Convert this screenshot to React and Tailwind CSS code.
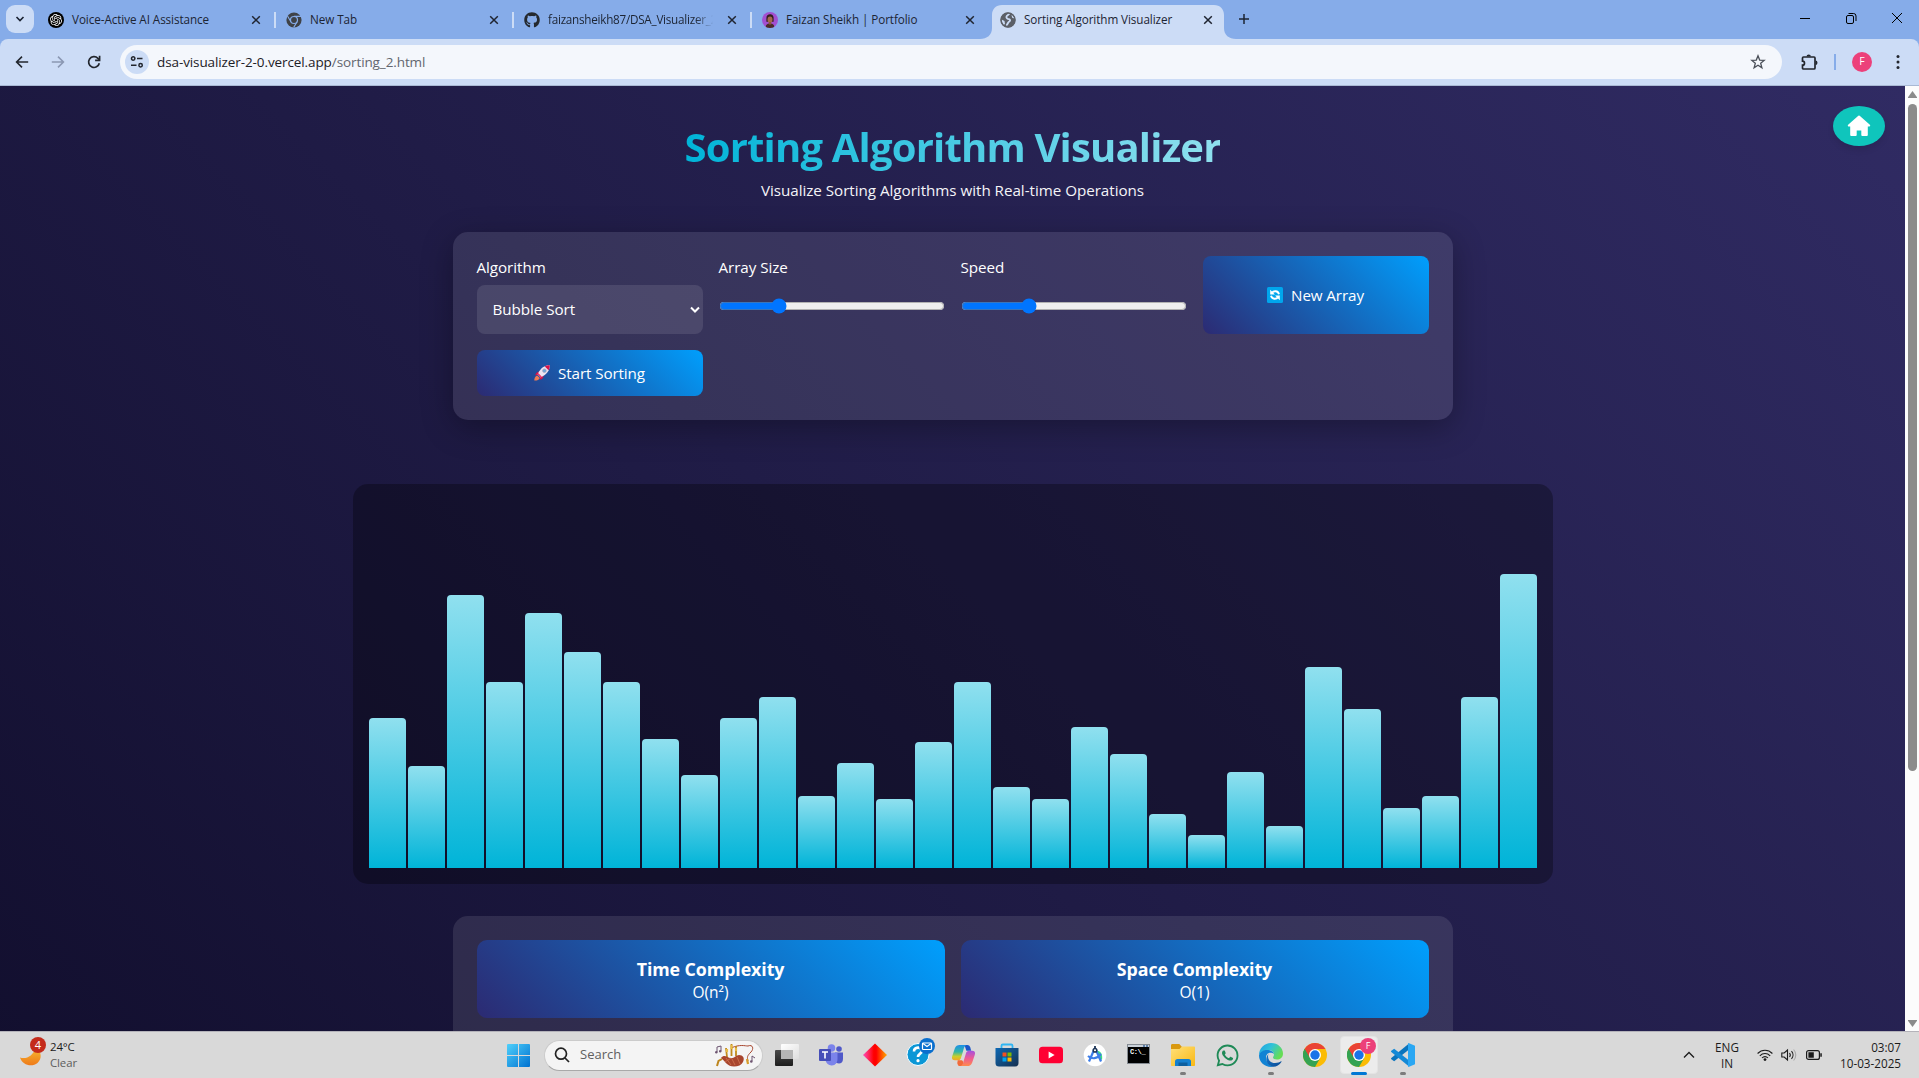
import React from "react";
import { SiOpenai } from "react-icons/si";
import { FaGithub } from "react-icons/fa";
import { IoLogoWhatsapp } from "react-icons/io5";

const BARS = [
  150, 102, 273, 186, 255, 216, 186, 129, 93, 150, 171, 72, 105, 69, 126, 186, 81, 69, 141, 114,
  54, 33, 96, 42, 201, 159, 60, 72, 171, 294,
];

/* ---------- browser chrome icons ---------- */

function CloseIcon() {
  return (
    <svg className="size-[10px] shrink-0" viewBox="0 0 10 10" fill="none" stroke="#1f2430" strokeWidth="1.5">
      <path d="M1.2 1.2l7.6 7.6M8.8 1.2l-7.6 7.6" />
    </svg>
  );
}

function ChromeMono() {
  return (
    <svg className="size-4" viewBox="0 0 16 16">
      <circle cx="8" cy="8" r="7.6" fill="#3f4247" />
      <circle cx="8" cy="8" r="3.5" fill="none" stroke="#86ace9" strokeWidth="1.2" />
      <path d="M8 4.4h7M4.9 9.8L1.5 4M11.1 9.8L7.7 15.4" stroke="#86ace9" strokeWidth="1.1" />
    </svg>
  );
}

function Avatar() {
  return (
    <svg className="size-4" viewBox="0 0 16 16">
      <clipPath id="av"><circle cx="8" cy="8" r="8" /></clipPath>
      <g clipPath="url(#av)">
        <rect width="16" height="16" fill="#a24fd0" />
        <path d="M4.4 6.5C4.200 3.600 6 2.300 8 2.300s3.900 1.300 3.600 4.400v3H4.400z" fill="#33201f" />
        <ellipse cx="8" cy="7.600" rx="2.500" ry="3.200" fill="#a5694d" />
        <path d="M3.500 16c0-3.500 2-4.600 4.500-4.600s4.500 1.100 4.500 4.600z" fill="#4b2c25" />
        <path d="M6.800 10h2.400v2.500H6.800z" fill="#8f5840" />
      </g>
    </svg>
  );
}

function Globe() {
  return (
    <svg className="size-4" viewBox="0 0 16 16">
      <circle cx="8" cy="8" r="7.400" fill="#5c6068" />
      <path d="M9.500 1.500C8.500 3 7 3 6.500 4.500 6 6 7.500 7 9 7.200c1.500.3 1.500 1.800 0 2.600-1.200.7-1 1.800-2.200 3" fill="none" stroke="#ccdcf6" strokeWidth="1.800" strokeLinecap="round" />
      <path d="M1.500 7.500l3 1.500.5 3-1.500 1A7 7 0 011.500 7.500zM11.500 3l2 .5 1 3-2.300-.8z" fill="#ccdcf6" />
      <circle cx="8" cy="8" r="7" fill="none" stroke="#5c6068" strokeWidth="1.500" />
    </svg>
  );
}

function Tab({ icon, title, faded, divider }) {
  return (
    <div className="relative flex h-[29px] w-[238px] shrink-0 items-center">
      <span className="ml-[14px] flex size-4 shrink-0 items-center justify-center">{icon}</span>
      <span
        className={
          "ml-2 w-[167px] shrink-0 whitespace-nowrap text-[11.7px] text-[#1c2433] " +
          (faded
            ? "tracking-[-0.25px] [mask-image:linear-gradient(to_right,#000_88%,transparent_99%)]"
            : "tracking-[-0.08px]")
        }
      >
        {title}
      </span>
      <span className="ml-3 flex shrink-0">
        <CloseIcon />
      </span>
      {divider && <span className="ml-[13px] h-4 w-[2px] shrink-0 bg-[#ccdcf6]" />}
    </div>
  );
}

function TabBar() {
  return (
    <div className="flex h-[39px] items-start bg-[#86ace9] pt-[5px]">
      <div className="ml-[6px] flex size-7 shrink-0 items-center justify-center rounded-[9px] bg-[#ccdcf6]">
        <svg className="size-[10px]" viewBox="0 0 10 10" fill="none" stroke="#1c2433" strokeWidth="1.600"><path d="M1.500 3l3.500 3.600L8.500 3" /></svg>
      </div>
      <Tab divider icon={<span className="flex size-4 items-center justify-center rounded-full bg-black"><SiOpenai className="size-3 text-white" /></span>} title="Voice-Active AI Assistance" />
      <Tab divider icon={<ChromeMono />} title="New Tab" />
      <Tab divider faded icon={<FaGithub className="size-4 text-[#24292f]" />} title="faizansheikh87/DSA_Visualizer_2" />
      <Tab icon={<Avatar />} title="Faizan Sheikh | Portfolio" />
      <div className="relative h-[34px] w-[238px] shrink-0">
        <svg className="absolute top-0 -left-[6px] h-[34px] w-[256px]" viewBox="0 0 256 34">
          <path d="M0 34c7 0 12-4 12-11V10C12 4 16 0 22 0h212c6 0 10 4 10 10v13c0 7 5 11 12 11z" fill="#ccdcf6" />
        </svg>
        <Tab icon={<Globe />} title="Sorting Algorithm Visualizer" />
      </div>
      <svg className="mt-[8px] ml-[14px] size-3" viewBox="0 0 12 12" stroke="#1c2433" strokeWidth="1.500"><path d="M6 1v10M1 6h10" /></svg>
      <div className="mt-[7px] mr-4 ml-auto flex items-center gap-[34px]">
        <svg className="size-3" viewBox="0 0 12 12" stroke="#000"><path d="M1 6.500h10" /></svg>
        <svg className="size-3" viewBox="0 0 12 12" fill="none" stroke="#000"><rect x="1.500" y="3.500" width="7" height="8" rx="1.500" /><path d="M3.500 1.500h5a2.500 2.500 0 012.500 2.500v5" /></svg>
        <svg className="size-3" viewBox="0 0 12 12" stroke="#000"><path d="M1 1l10 10M11 1L1 11" /></svg>
      </div>
    </div>
  );
}

function Toolbar() {
  return (
    <div className="bg-[#86ace9]">
      <div className="flex h-[47px] items-center rounded-t-[8px] border-b border-[#a9b9d4] bg-[#ccdcf6] pl-[15px]">
        <svg className="size-[14px]" viewBox="0 0 14 14" fill="none" stroke="#22262e" strokeWidth="1.600"><path d="M13.200 7H1.800M7 1.600L1.600 7 7 12.400" /></svg>
        <svg className="ml-[22px] size-[14px]" viewBox="0 0 14 14" fill="none" stroke="#8b98b3" strokeWidth="1.600"><path d="M.8 7h11.400M7 1.600L12.400 7 7 12.400" /></svg>
        <svg className="ml-[22px] size-[14px]" viewBox="0 0 14 14" fill="none" stroke="#22262e" strokeWidth="1.700"><path d="M12.300 8.200A5.400 5.400 0 1110.900 3.300L12.300 4.700" /><path d="M12.600.8v4.500H8.100" /></svg>
        <div className="ml-[19px] flex h-[34px] w-[1662px] items-center rounded-full bg-[#f4f7fc] pl-[5px]">
          <span className="flex size-6 items-center justify-center rounded-full bg-[#ccdcf6]">
            <svg className="size-[14px]" viewBox="0 0 14 14" fill="none" stroke="#22262e" strokeWidth="1.500"><circle cx="3.200" cy="3.500" r="1.700" /><path d="M7 3.500h5.500M1 10.300h5.500" /><circle cx="10.600" cy="10.300" r="1.700" /></svg>
          </span>
          <span className="mt-px ml-2 text-[13.500px] tracking-[-0.1px] whitespace-nowrap text-[#1d2026]">
            dsa-visualizer-2-0.vercel.app<span className="text-[#62666e]">/sorting_2.html</span>
          </span>
          <svg className="mr-[16px] ml-auto size-4" viewBox="0 0 16 16" fill="none" stroke="#4a4f58" strokeWidth="1.300"><path d="M8 1.800l1.700 4.300 4.500.3-3.500 2.900 1.200 4.500L8 11.300l-3.900 2.500 1.200-4.500L1.800 6.400l4.500-.3z" /></svg>
        </div>
        <svg className="ml-[18px] size-[18px]" viewBox="0 0 18 18"><path d="M2.500 5a1 1 0 011-1H14a1 1 0 011 1v10a1 1 0 01-1 1H3.500a1 1 0 01-1-1v-2.800a2 2 0 000-4z" fill="none" stroke="#22262e" strokeWidth="1.700" /><path d="M6.500 3.500a2.200 2 0 014.400 0zM15.500 7.600a2 2.200 0 010 4.400z" fill="#22262e" /></svg>
        <span className="ml-[16px] h-4 w-[2px] bg-[#86ace9]" />
        <span className="ml-[16px] flex size-5 items-center justify-center rounded-full bg-[#ec407a] text-[10.500px] text-white">F</span>
        <svg className="ml-[24px] h-4 w-1" viewBox="0 0 4 16" fill="#22262e"><circle cx="2" cy="2.500" r="1.500" /><circle cx="2" cy="8" r="1.500" /><circle cx="2" cy="13.500" r="1.500" /></svg>
      </div>
    </div>
  );
}

/* ---------- page ---------- */

function Rocket() {
  return (
    <svg className="size-4" viewBox="0 0 16 16">
      <path d="M4.500 6.200L2 8.200l-.8 2.300 3.300-.8zM10 11.300L8 14l-2.300.8.800-3.300z" fill="#d4144c" />
      <path d="M3.200 10.400l2.600 2.600c-1 2-3 2.700-5.500 2.500C.2 13.200 1.200 11.200 3.200 10.400z" fill="#ef7a52" />
      <path d="M15.700.3C11 .2 6.500 2.700 3.600 9.400l3 3C13 9.600 16 5 15.700.3z" fill="#ece4f2" />
      <path d="M15.700.3c-1.800 0-3.400.3-4.900 1.100l3.800 3.800C15.500 3.600 15.800 2 15.700.3z" fill="#d4144c" />
      <path d="M4.200 8.100l-.6 1.300 3 3 1.300-.6z" fill="#f0356c" />
      <circle cx="10.400" cy="5.700" r="1.800" fill="#69a9dc" stroke="#a79bb8" strokeWidth=".7" />
    </svg>
  );
}

function Refresh() {
  return (
    <svg className="size-4" viewBox="0 0 16 16">
      <rect width="16" height="16" rx="1.500" fill="#00a6ed" />
      <path d="M5 5.800C6.500 3.600 11 3.400 12 7.200M11 10.200c-1.500 2.200-6 2.400-7-1.400" fill="none" stroke="#fff" strokeWidth="1.900" />
      <path d="M3.200 2.800v4.700h4.700zM12.800 13.200V8.500H8.100z" fill="#fff" />
    </svg>
  );
}

function House() {
  return (
    <svg className="h-[22px] w-6" viewBox="0 0 24 22">
      <path
        d="M12 1.500L1.800 10.600h2.400V20h4.500v-5.500h6.600V20h4.500v-9.400h2.400z"
        fill="#fff"
        stroke="#fff"
        strokeWidth="2"
        strokeLinejoin="round"
      />
    </svg>
  );
}

const GRADIENT = "bg-[linear-gradient(45deg,#2c2a72,#009ffd)]";

function Range({ label, value }) {
  return (
    <div>
      <div className="h-[23px] text-[15.200px] leading-[22px] font-medium tracking-[-0.05px]">{label}</div>
      <input type="range" min="0" max="100" step="0.1" defaultValue={value} className="mt-[19px] block h-4 w-[226px]" />
    </div>
  );
}

function Complexity({ title, value }) {
  return (
    <div className={"flex h-[78px] flex-col items-center rounded-[10px] pt-4 " + GRADIENT}>
      <div className="text-[17.800px] leading-[26px] font-bold tracking-[-0.08px]">{title}</div>
      <div className="text-[15.500px] leading-[21px] font-medium">{value}</div>
    </div>
  );
}

function Page() {
  return (
    <div className="flex h-[945px] overflow-hidden">
      <div className="relative h-[1290px] w-[1905px] bg-[linear-gradient(45deg,#0f0c29,#302b63)] text-white">
        <div className="absolute top-5 right-5 flex h-10 w-[52px] items-center justify-center rounded-[50%] bg-[#0fc5bc] shadow-[0_4px_6px_rgba(0,0,0,0.1)]">
          <House />
        </div>
        <header className="flex flex-col items-center pt-[33px]">
          <h1 className="bg-[linear-gradient(90deg,#00b4d8,#90e0ef)] bg-clip-text text-[40px] leading-[56px] font-bold tracking-[-0.82px] whitespace-nowrap text-transparent">
            Sorting Algorithm Visualizer
          </h1>
          <p className="mt-[3px] text-[15.200px] leading-6 font-medium tracking-[-0.03px] text-[#f4f4f8]">Visualize Sorting Algorithms with Real-time Operations</p>
        </header>
        <section className="mx-auto mt-[30px] grid h-[188px] w-[1000px] grid-cols-4 grid-rows-[78px_46px] gap-4 rounded-[15px] bg-white/10 p-6 shadow-[0_8px_32px_rgba(0,0,0,0.3)]">
          <div>
            <div className="h-[23px] text-[15.200px] leading-[22px] font-medium tracking-[-0.05px]">Algorithm</div>
            <div className="mt-[6px] flex h-[49px] items-center justify-between rounded-lg bg-white/10 pr-[3px] pl-4 text-[15.200px] font-medium tracking-[-0.05px]">
              Bubble Sort
              <svg className="size-[10px]" viewBox="0 0 10 10" fill="none" stroke="#fff" strokeWidth="2"><path d="M1 2.500l4 4 4-4" /></svg>
            </div>
          </div>
          <Range label="Array Size" value={25} />
          <Range label="Speed" value={29} />
          <div className={"flex items-center justify-center gap-2 rounded-lg text-[15.200px] font-medium tracking-[-0.1px] " + GRADIENT}>
            <Refresh />
            New Array
          </div>
          <div className={"flex items-center justify-center gap-2 rounded-lg text-[15.200px] font-medium tracking-[-0.1px] " + GRADIENT}>
            <Rocket />
            Start Sorting
          </div>
        </section>
        <section className="mx-auto mt-16 flex h-[400px] w-[1200px] items-end gap-[2px] rounded-[15px] bg-black/30 p-4">
          {BARS.map((h, i) => (
            <div key={i} className="flex-1 rounded-t-[4px] bg-[linear-gradient(0deg,#00b4d8,#90e0ef)]" style={{ height: h }} />
          ))}
        </section>
        <section className="mx-auto mt-8 grid h-[188px] w-[1000px] grid-cols-2 content-start gap-4 rounded-[15px] bg-white/10 p-6">
          <Complexity title="Time Complexity" value="O(n²)" />
          <Complexity title="Space Complexity" value="O(1)" />
        </section>
      </div>
      <div className="flex h-[945px] w-[14px] flex-col items-center bg-[#fcfcfc]">
        <svg className="mt-[5px] h-[7px] w-[9px]" viewBox="0 0 9 7" fill="#8b8b8b"><path d="M4.500 0L9 6.200V7H0V6.200z" /></svg>
        <div className="mt-[6px] h-[667px] w-[9px] rounded-full bg-[#8b8b8b]" />
        <svg className="mt-auto mb-[4px] h-[7px] w-[9px]" viewBox="0 0 9 7" fill="#8b8b8b"><path d="M4.500 7L9 .8V0H0V.8z" /></svg>
      </div>
    </div>
  );
}

/* ---------- taskbar ---------- */

function Windows() {
  return (
    <svg className="size-[23px]" viewBox="0 0 23 23">
      <defs><linearGradient id="win" x1="0" y1="0" x2="1" y2="1"><stop offset="0" stopColor="#4fd0fb" /><stop offset="1" stopColor="#0071d0" /></linearGradient></defs>
      <path d="M1 0h10v11H0V1a1 1 0 011-1zM12 0h10a1 1 0 011 1v10H12zM0 12h11v11H1a1 1 0 01-1-1zM12 12h11v10a1 1 0 01-1 1H12z" fill="url(#win)" />
    </svg>
  );
}

function Bagpipes() {
  return (
    <svg className="h-[24px] w-[44px]" viewBox="0 0 44 24" fill="none">
      <path d="M17 5C26 1 31 3 34 3c5-2 6 3 3 6-4 4-4 5-3 9" stroke="#a8472f" strokeWidth="1" />
      <path d="M13 14L12 5M17.500 13V1M22 13V3" stroke="#c08a1c" strokeWidth="1.800" />
      <path d="M13 9v-3M17.500 6V2M22 8V5" stroke="#e8bb45" strokeWidth="2.200" />
      <path d="M7 15c3-4 6-1 9 0 4 1 6-3 9-3 4 0 6 3 4 7-1.500 3-5 4.500-9 4.500-7 0-8-4.500-13-8.500z" fill="#a8452d" />
      <path d="M12 15l5 7M18 16l3 6M23 14l3 7M11 19l6-4" stroke="#cf7550" strokeWidth=".8" />
      <path d="M8 16L4.500 18 3 23" stroke="#bd861f" strokeWidth="2" />
      <path d="M33 16l1 5" stroke="#d79d2b" strokeWidth="2.200" />
      <path d="M3 9V4l4-1v5M38 18v-5l3 2" stroke="#6d5470" strokeWidth="1" />
      <circle cx="2.300" cy="9.200" r="1.200" fill="#6d5470" /><circle cx="6.200" cy="8.200" r="1.200" fill="#6d5470" /><circle cx="37.300" cy="18.500" r="1.300" fill="#6d5470" />
    </svg>
  );
}

function TaskView() {
  return (
    <svg className="size-6" viewBox="0 0 24 24">
      <defs>
        <linearGradient id="tv1" x1="0" y1="0" x2="0" y2="1"><stop offset="0" stopColor="#4a4a4a" /><stop offset="1" stopColor="#1d1d1d" /></linearGradient>
        <linearGradient id="tv2" x1="0" y1="0" x2="1" y2="1"><stop offset="0" stopColor="#fff" /><stop offset="1" stopColor="#dedede" /></linearGradient>
      </defs>
      <rect x="0" y="7" width="18" height="16" rx="1" fill="url(#tv1)" />
      <rect x="6" y="1" width="18" height="15" rx="1" fill="url(#tv2)" />
      <path d="M6 7h12v9H6z" fill="#b5b5b5" />
    </svg>
  );
}

function Teams() {
  return (
    <svg className="size-6" viewBox="0 0 24 24">
      <circle cx="20" cy="6" r="2.800" fill="#5059c9" /><circle cx="12.500" cy="5" r="3.800" fill="#7b83eb" />
      <path d="M16 9.500h8V16c0 3-2 4.500-4 4.500s-4-1-4-4z" fill="#5059c9" />
      <path d="M6.500 9.500h12V16a6 6 0 01-12 1z" fill="#7b83eb" />
      <rect x="0" y="6" width="12" height="12" rx="1" fill="#464eb8" />
      <path d="M3 9h6M6 9v6.500" stroke="#fff" strokeWidth="1.600" />
    </svg>
  );
}

function Diamond() {
  return (
    <svg className="size-6" viewBox="0 0 24 24">
      <defs><linearGradient id="dia"><stop offset=".05" stopColor="#ff45a8" /><stop offset=".45" stopColor="#f00" /><stop offset=".55" stopColor="#f00" /><stop offset=".95" stopColor="#ff9a00" /></linearGradient></defs>
      <path d="M12 .5L24 12 12 23.500 0 12z" fill="url(#dia)" />
    </svg>
  );
}

function Help() {
  return (
    <svg className="ml-[3px] h-7 w-[30px] shrink-0 -translate-y-[3px]" viewBox="0 0 30 28">
      <circle cx="12" cy="16.500" r="11" fill="#0a97d6" stroke="#fff" />
      <path d="M8 13.500c0-5 8-5 8-.7 0 3-4 2.700-4 6.200" fill="none" stroke="#fff" strokeWidth="2.600" /><circle cx="12" cy="22.700" r="1.600" fill="#fff" />
      <circle cx="21" cy="8" r="8" fill="#0a6fce" />
      <rect x="16.500" y="5" width="9" height="6.500" rx=".8" fill="none" stroke="#fff" strokeWidth="1.200" /><path d="M17 5.500l4 3 4-3" fill="none" stroke="#fff" strokeWidth="1.100" />
    </svg>
  );
}

function Copilot() {
  return (
    <svg className="size-[23px]" viewBox="0 0 24 24">
      <defs>
        <linearGradient id="cp1" x1="0" y1="0" x2="0" y2="1"><stop offset="0" stopColor="#1b8fe8" /><stop offset=".45" stopColor="#33b6a6" /><stop offset=".75" stopColor="#c9cf2b" /><stop offset="1" stopColor="#f5a524" /></linearGradient>
        <linearGradient id="cp2" x1="0" y1="0" x2="0" y2="1"><stop offset="0" stopColor="#a450e0" /><stop offset=".5" stopColor="#ee5b93" /><stop offset="1" stopColor="#ff8a4c" /></linearGradient>
      </defs>
      <path d="M13 1h3c2 0 2.500 1 3 2.500L20 7h-5z" fill="#1a56c9" />
      <path d="M8 1h7c-2 1-2.500 3-3.200 5.500L9.500 14C9 16 8 17 6 17H3c-3 0-3.500-2-2.700-4.500L3 4.500C4 2 5.500 1 8 1z" fill="url(#cp1)" />
      <path d="M6 17h4c2 0 2 4 1 6H8c-1.500 0-2-1.500-2.500-3z" fill="#f26a3a" />
      <path d="M16 23H9c2-1 2.500-3 3.200-5.500l2.300-7.500c.5-2 1.500-3 3.500-3h3c3 0 3.500 2 2.700 4.500L21 19.500C20 22 18.500 23 16 23z" fill="url(#cp2)" />
    </svg>
  );
}

function Store() {
  return (
    <svg className="size-6" viewBox="0 0 24 24">
      <defs><linearGradient id="st" x1="0" y1="0" x2="1" y2="1"><stop offset="0" stopColor="#0d68b4" /><stop offset="1" stopColor="#16304f" /></linearGradient></defs>
      <path d="M6.500 6V2.800c0-.8.500-1.300 1.300-1.300h8.400c.8 0 1.300.5 1.300 1.300V6" fill="none" stroke="#2fb5f3" strokeWidth="1.800" />
      <path d="M.5 5h23v15a3.500 3.500 0 01-3.500 3.500H4A3.500 3.500 0 01.5 20z" fill="url(#st)" />
      <path d="M7.500 9.500h4v4h-4z" fill="#f25022" /><path d="M12.500 9.500h4v4h-4z" fill="#7fba00" /><path d="M7.500 14.500h4v4h-4z" fill="#00a4ef" /><path d="M12.500 14.500h4v4h-4z" fill="#ffb900" />
    </svg>
  );
}

function YouTube() {
  return (
    <svg className="size-6" viewBox="0 0 24 24"><rect x="0" y="3.700" width="24" height="16.600" rx="3.500" fill="#ff0033" /><path d="M9.600 8.500v7l6-3.500z" fill="#fff" /></svg>
  );
}

function AndroidStudio() {
  return (
    <svg className="size-6" viewBox="0 0 24 24">
      <circle cx="12" cy="12" r="11.300" fill="#fff" />
      <path d="M13 8c4-1 7 3 6 9l-3-2z" fill="#3ddc84" />
      <path d="M11 7L6 18.500M13 7l5 11.500M5 13c4 3.500 9 3 13-2" fill="none" stroke="#3c7de8" strokeWidth="2.200" />
      <circle cx="12" cy="7.200" r="1.800" fill="#fff" stroke="#1d3557" strokeWidth="1.500" /><path d="M12 3v3" stroke="#1d3557" strokeWidth="1.800" />
    </svg>
  );
}

function Cmd() {
  return (
    <div className="mr-px flex h-[20px] w-[23px] -translate-y-px flex-col border border-[#858b92] bg-black">
      <div className="flex h-[2px] shrink-0 justify-end gap-px bg-[#c9d0d8] pr-px"><span className="w-[2px] bg-[#5d7fa8]" /><span className="w-[2px] bg-[#5d7fa8]" /></div>
      <span className="mt-px ml-[2px] font-['Liberation_Mono'] text-[7px] leading-[8px] font-bold tracking-[-0.400px] text-white">C:\_</span>
    </div>
  );
}

function Folder() {
  return (
    <svg className="size-6" viewBox="0 0 24 24">
      <defs><linearGradient id="fo" x1="0" y1="0" x2="1" y2="1"><stop offset="0" stopColor="#ffe07a" /><stop offset="1" stopColor="#f9b814" /></linearGradient></defs>
      <path d="M0 2.500C0 1.500.6 1 1.500 1h6.800l2.700 3h12v6H0z" fill="#d9980f" />
      <path d="M0 6h8.500L11 3.500h12c.6 0 1 .4 1 1V22c0 .6-.4 1-1 1H1c-.6 0-1-.4-1-1z" fill="url(#fo)" />
      <path d="M4 23v-4.500C4 17 5 16 6.500 16h11c1.500 0 2.500 1 2.500 2.500V23z" fill="#1480cf" /><path d="M7.500 19.500h9V23h-9z" fill="#0c5f9e" />
    </svg>
  );
}

function Edge() {
  return (
    <svg className="size-6" viewBox="0 0 24 24">
      <defs>
        <linearGradient id="ed1" x1="0" y1="0" x2="1" y2=".5"><stop offset="0" stopColor="#1e9fe4" /><stop offset=".5" stopColor="#31c2d8" /><stop offset="1" stopColor="#66dd55" /></linearGradient>
        <linearGradient id="ed2" x1="0" y1="0" x2="1" y2="1"><stop offset="0" stopColor="#1579cf" /><stop offset="1" stopColor="#0c4a92" /></linearGradient>
      </defs>
      <path d="M0 12C0 5 5.500 0 12 0c7 0 12 5 12 10.500 0 4-3 6-6 6-2.500 0-4-1-4-2 0-.8 1-1.200 1-3C15 8.500 12.500 7 9.500 7 5 7 1 10 0 12z" fill="url(#ed1)" />
      <path d="M0 12.500C.5 9 4.500 7 8 7c3.500 0 6.500 1.500 7 4-1-1-2-1.300-3.500-1.300C8.500 9.700 7 12 7 14.500c0 4 3 8.500 7.500 9.200C7 25 0 20 0 12.500z" fill="#1183d4" />
      <path d="M9.500 11c-1.500 3.500.5 9 6.500 9 3 0 4.500-.8 6-1.700.4-.2.700.2.400.6C20.500 22 17 24 14 23.800 8 22.500 5 16 9.500 11z" fill="url(#ed2)" />
    </svg>
  );
}

function Chrome() {
  return (
    <svg className="size-6" viewBox="0 0 24 24">
      <circle cx="12" cy="12" r="12" fill="#fbbc05" />
      <path d="M1.600 6A12 12 0 0012 24l5.200-9L12 12z" fill="#34a353" />
      <path d="M1.600 6A12 12 0 0122.400 6H12v6l-5.200 3z" fill="#ea4335" />
      <path d="M1.600 6l5.200 9 1.200 3-5-1L.3 9z" fill="#34a353" />
      <circle cx="12" cy="12" r="6" fill="#fff" /><circle cx="12" cy="12" r="4.700" fill="#1a73e8" />
    </svg>
  );
}

function VSCode() {
  return (
    <svg className="size-6" viewBox="0 0 24 24">
      <path d="M18 0.500v6L3.200 18.200.3 16.200c-.4-.4-.4-.9 0-1.300z" fill="#0a74bd" />
      <path d="M18 23.500v-6L3.200 5.800.3 7.800c-.4.400-.4.900 0 1.300z" fill="#1489d6" />
      <path d="M17.500 0L24 2.800v18.400L17.500 24c-.4-.3-.5-.6-.5-1V1c0-.4.100-.7.500-1z" fill="#2aa7f3" />
    </svg>
  );
}

function TaskItem({ children, mark }) {
  return (
    <div className="relative flex h-[47px] w-11 items-center justify-center">
      {children}
      {mark && <span className="absolute bottom-[4px] h-[3px] w-[6px] rounded-full bg-[#7c7c7c]" />}
    </div>
  );
}

function Taskbar() {
  return (
    <div className="relative flex h-[47px] items-center border-t border-[#b4b3ba] bg-[#d9d9d9]">
      <div className="ml-[15px] flex w-[481px] items-center">
        <div className="relative h-9 w-[35px]">
          <svg className="absolute top-[6px] left-[4px] h-[26px] w-[24px]" viewBox="0 0 24 26">
            <defs><linearGradient id="moon" x1="0" y1="0" x2="0" y2="1"><stop offset="0" stopColor="#f8bd32" /><stop offset="1" stopColor="#ee7a1a" /></linearGradient></defs>
            <path d="M17 4c6 5 6 12 1.500 16-5.500 4.500-15 2.500-17.500-5.500 6 2 13-1 16-10.500z" fill="url(#moon)" />
          </svg>
          <span className="absolute top-0 left-[15px] flex size-4 items-center justify-center rounded-full bg-[#c42b1c] text-[11px] text-white">4</span>
        </div>
        <div className="text-[11.400px] leading-4 tracking-[-0.1px] text-[#1b1b1b]">
          <div>24°C</div>
          <div className="text-[#5c5c5c]">Clear</div>
        </div>
      </div>
      <div className="flex w-11 items-center justify-center"><Windows /></div>
      <div className="ml-1 flex h-[31px] w-[219px] items-center rounded-full border border-[#cbcbcb] border-b-[#a9a9a9] bg-[#f4f4f4] pr-1 pl-[9px]">
        <svg className="size-4" viewBox="0 0 16 16" fill="none" stroke="#222" strokeWidth="1.700"><circle cx="7" cy="6.700" r="5.500" /><path d="M11 11l4 4" /></svg>
        <span className="ml-[10px] text-[13px] text-[#606060]">Search</span>
        <span className="ml-auto"><Bagpipes /></span>
      </div>
      <div className="ml-[2px] flex">
        <TaskItem><TaskView /></TaskItem>
        <TaskItem><Teams /></TaskItem>
        <TaskItem><Diamond /></TaskItem>
        <TaskItem><Help /></TaskItem>
        <TaskItem><Copilot /></TaskItem>
        <TaskItem><Store /></TaskItem>
        <TaskItem><YouTube /></TaskItem>
        <TaskItem><AndroidStudio /></TaskItem>
        <TaskItem><Cmd /></TaskItem>
        <TaskItem mark><Folder /></TaskItem>
        <TaskItem><IoLogoWhatsapp className="size-[25px] text-[#1f8a57]" /></TaskItem>
        <TaskItem mark><Edge /></TaskItem>
        <TaskItem><Chrome /></TaskItem>
        <TaskItem>
          <span className="flex h-[38px] w-[38px] items-center justify-center rounded-[4px] border border-[#e4e4e4] bg-[#ececec]"><Chrome /></span>
          <span className="absolute top-[6px] right-[5px] flex size-4 items-center justify-center rounded-full bg-[#ec407a] text-[9px] text-white">F</span>
          <span className="absolute bottom-[4px] h-[3px] w-4 rounded-full bg-[#0078d4]" />
        </TaskItem>
        <TaskItem mark><VSCode /></TaskItem>
      </div>
      <div className="mr-[18px] ml-auto flex items-center text-[11.700px] leading-4 text-[#1b1b1b]">
        <svg className="size-3" viewBox="0 0 12 12" fill="none" stroke="#1b1b1b" strokeWidth="1.300"><path d="M1 8.500l5-5 5 5" /></svg>
        <div className="ml-5 w-6 text-center whitespace-nowrap"><div>ENG</div><div>IN</div></div>
        <svg className="ml-[18px] h-[14px] w-4" viewBox="0 0 16 14" fill="none" stroke="#1b1b1b" strokeWidth="1.100"><path d="M.6 5.500c4.200-4.400 10.600-4.400 14.800 0M2.800 7.800c3-3.100 7.400-3.100 10.400 0M5 10c1.700-1.900 4.300-1.900 6 0" /><circle cx="8" cy="11.600" r="1.400" fill="#1b1b1b" stroke="none" /></svg>
        <svg className="ml-2 h-[14px] w-4" viewBox="0 0 16 14" fill="none" stroke="#1b1b1b" strokeWidth="1.100"><path d="M.8 5v4h2.400l3.300 3V2L3.200 5zM8.500 5c1 1.200 1 2.800 0 4M10.500 3.200c2 2.200 2 5.400 0 7.600" /><path d="M12.600 1.500c2.900 3.200 2.900 7.800 0 11" stroke="#a9a9a9" /></svg>
        <svg className="ml-[9px] h-[12px] w-4" viewBox="0 0 16 12"><rect x=".6" y="1.600" width="12.800" height="8.800" rx="2" fill="none" stroke="#1b1b1b" strokeWidth="1.200" /><path d="M2.400 3.200h5.400v5.600H2.400zM14.300 4.200h1.500v3.600h-1.500z" fill="#1b1b1b" /></svg>
        <div className="ml-[16px] w-[63px] text-right whitespace-nowrap"><div>03:07</div><div>10-03-2025</div></div>
      </div>
    </div>
  );
}

export default function App() {
  return (
    <div className="h-[1078px] w-[1919px] overflow-hidden font-['Open_Sans','Noto_Sans',sans-serif]">
      <TabBar />
      <Toolbar />
      <Page />
      <Taskbar />
    </div>
  );
}
